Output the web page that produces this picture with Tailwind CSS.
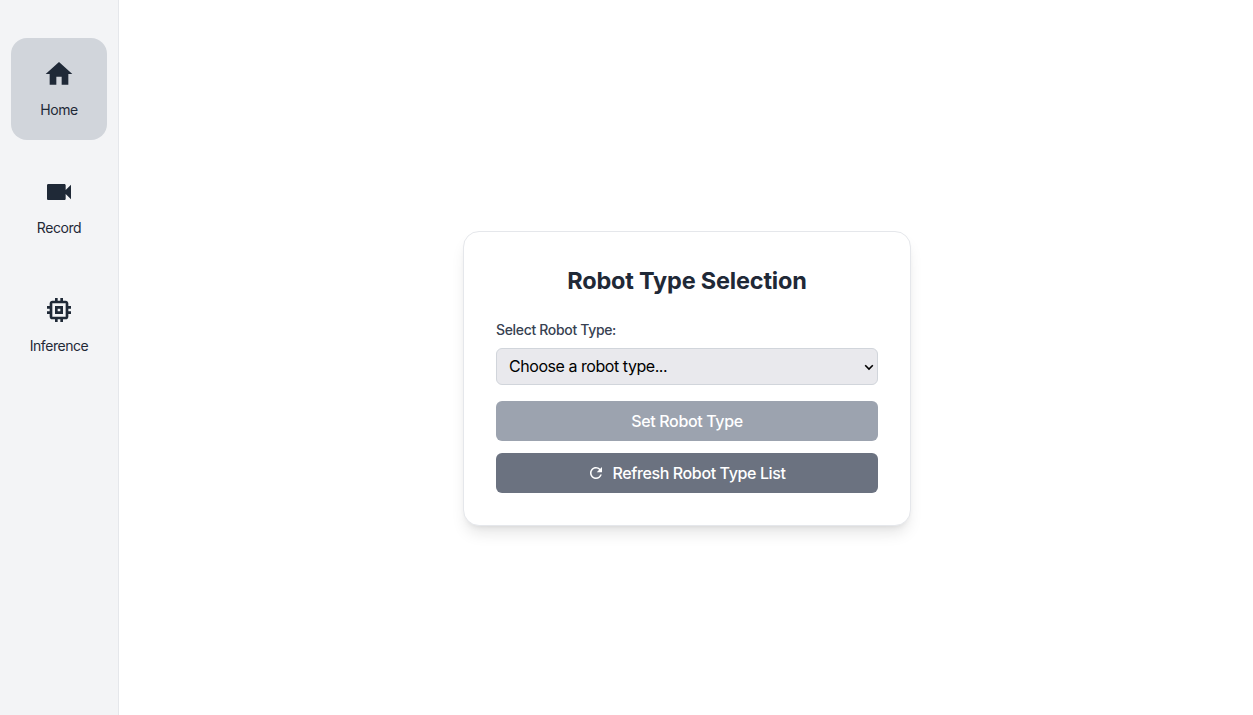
<!DOCTYPE html>
<html lang="en">
<head>
<meta charset="utf-8">
<title>Robot Type Selection</title>
<script src="https://cdn.jsdelivr.net/npm/@tailwindcss/browser@4"></script>
</head>
<body class="flex h-screen overflow-hidden bg-white font-['Pretendard','Inter',sans-serif] text-[#1f2937]">
<aside class="flex h-full w-[119px] shrink-0 flex-col items-center gap-4 border-r border-[#e5e7eb] bg-[#f3f4f6] pt-[38px]">
  <button class="flex h-[102px] w-24 flex-col items-center gap-2.5 rounded-2xl bg-[#d1d5db] pt-5 text-sm tracking-[-0.44px]">
    <svg class="size-8" viewBox="0 0 24 24" fill="currentColor"><path d="M10 20v-6h4v6h5v-8h3L12 3 2 12h3v8z"/></svg>
    <span>Home</span>
  </button>
  <button class="flex h-[102px] w-24 flex-col items-center gap-2.5 rounded-2xl pt-5 text-sm tracking-[-0.44px]">
    <svg class="size-8" viewBox="0 0 24 24" fill="currentColor"><path d="M17 10.500V7c0-.55-.45-1-1-1H4c-.55 0-1 .45-1 1v10c0 .55.45 1 1 1h12c.55 0 1-.45 1-1v-3.500l4 4v-11l-4 4z"/></svg>
    <span>Record</span>
  </button>
  <button class="flex h-[102px] w-24 flex-col items-center gap-2.5 rounded-2xl pt-5 text-sm tracking-[-0.44px]">
    <svg class="size-8" viewBox="0 0 24 24" fill="currentColor"><path d="M15 9H9v6h6V9zm-2 4h-2v-2h2v2zm8-2V9h-2V7c0-1.100-.9-2-2-2h-2V3h-2v2h-2V3H9v2H7c-1.100 0-2 .9-2 2v2H3v2h2v2H3v2h2v2c0 1.100.9 2 2 2h2v2h2v-2h2v2h2v-2h2c1.100 0 2-.9 2-2v-2h2v-2h-2v-2h2zm-4 6H7V7h10v10z"/></svg>
    <span>Inference</span>
  </button>
</aside>
<main class="flex flex-1 items-center justify-center pt-[42px] pl-0.5">
  <section class="w-md rounded-2xl border border-[#e5e7eb] bg-white p-8 shadow-lg">
    <h1 class="mb-[23px] pt-px text-center text-[23.5px] leading-8 font-bold tracking-[-0.2px]">Robot Type Selection</h1>
    <label for="robot" class="mb-2 block text-sm font-[480] tracking-[-0.33px] text-[#374151]">Select Robot Type:</label>
    <div class="relative mb-4">
      <select id="robot" class="block h-[37px] w-full appearance-none rounded-md border border-[#d1d5db] bg-[#e9e9ed] px-3 pb-0.5 text-base tracking-[-0.45px] text-black">
        <option>Choose a robot type...</option>
      </select>
      <svg class="pointer-events-none absolute top-4 right-1 h-[7px] w-2.5" viewBox="0 0 10 7" fill="none" stroke="black" stroke-width="1.600"><path d="M1.200 1.200 5 5 8.800 1.200"/></svg>
    </div>
    <button class="mb-3 block h-10 w-full rounded-md bg-[#9ca3af] text-base font-[480] tracking-[-0.36px] text-white">Set Robot Type</button>
    <button class="flex h-10 w-full items-center justify-center gap-[7px] rounded-md bg-[#6b7280] pr-px text-base font-[480] tracking-[-0.38px] text-white">
      <svg class="size-[18px]" viewBox="0 0 24 24" fill="currentColor"><path d="M17.650 6.350A7.958 7.958 0 0 0 12 4c-4.420 0-7.990 3.580-7.990 8s3.570 8 7.990 8c3.730 0 6.840-2.550 7.730-6h-2.080A5.990 5.990 0 0 1 12 18c-3.310 0-6-2.690-6-6s2.690-6 6-6c1.660 0 3.140.69 4.220 1.780L13 11h7V4l-2.350 2.350z"/></svg>
      <span>Refresh Robot Type List</span>
    </button>
  </section>
</main>
</body>
</html>
